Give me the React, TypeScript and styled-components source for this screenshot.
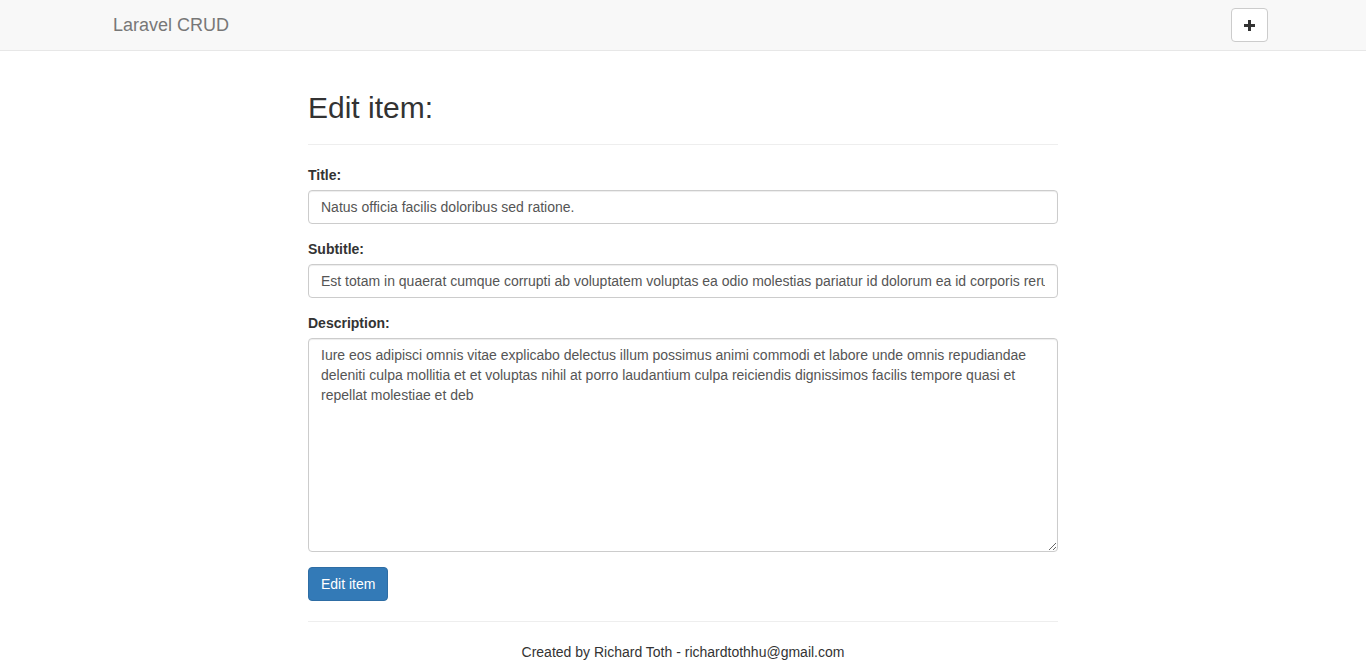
import React from "react"
import styled, { createGlobalStyle } from "styled-components"

const GlobalStyle = createGlobalStyle`
  * {
    box-sizing: border-box;
  }
  body {
    margin: 0;
    background: #fff;
    font-family: "Liberation Sans", Arial, sans-serif;
    font-size: 14px;
    line-height: 1.42857143;
    color: #333;
  }
`

const App: React.FC = () => {
  return (
    <>
      <GlobalStyle />
      <Navbar />
      <Content>
        <PageTitle>Edit item:</PageTitle>
        <Rule />
        <form onSubmit={e => e.preventDefault()}>
          <FormGroup>
            <Label htmlFor="title">Title:</Label>
            <Input id="title" defaultValue="Natus officia facilis doloribus sed ratione." />
          </FormGroup>
          <FormGroup>
            <Label htmlFor="subtitle">Subtitle:</Label>
            <Input
              id="subtitle"
              defaultValue="Est totam in quaerat cumque corrupti ab voluptatem voluptas ea odio molestias pariatur id dolorum ea id corporis rerum."
            />
          </FormGroup>
          <FormGroup>
            <Label htmlFor="description">Description:</Label>
            <TextArea
              id="description"
              rows={10}
              defaultValue="Iure eos adipisci omnis vitae explicabo delectus illum possimus animi commodi et labore unde omnis repudiandae deleniti culpa mollitia et et voluptas nihil at porro laudantium culpa reiciendis dignissimos facilis tempore quasi et repellat molestiae et deb"
            />
          </FormGroup>
          <PrimaryButton type="submit">Edit item</PrimaryButton>
        </form>
        <Rule />
        <Footer>Created by Richard Toth - richardtothhu@gmail.com</Footer>
      </Content>
    </>
  )
}

const Navbar: React.FC = () => {
  return (
    <StyledNavbar>
      <div className="nav-inner">
        <Brand href="#">Laravel CRUD</Brand>
        <IconButton type="button" aria-label="Add item">
          <svg width="11" height="11" viewBox="0 0 11 11">
            <path d="M4 0h3v4h4v3H7v4H4V7H0V4h4z" fill="#333" />
          </svg>
        </IconButton>
      </div>
    </StyledNavbar>
  )
}

const StyledNavbar = styled.nav`
  min-height: 50px;
  background-color: #f8f8f8;
  border-bottom: 1px solid #e7e7e7;
  margin-bottom: 20px;
  & .nav-inner {
    width: 1170px;
    margin: 0 auto;
    padding: 0 0 0 15px;
    height: 50px;
    display: flex;
    align-items: center;
    justify-content: space-between;
  }
`

const Brand = styled.a`
  font-size: 18px;
  line-height: 20px;
  color: #777;
  text-decoration: none;
`

const IconButton = styled.button`
  width: 37px;
  height: 34px;
  display: flex;
  align-items: center;
  justify-content: center;
  padding: 0;
  background: #fff;
  border: 1px solid #ccc;
  border-radius: 4px;
  cursor: pointer;
`

const Content = styled.main`
  display: flow-root;
  width: 750px;
  margin: 0 auto;
`

const PageTitle = styled.h2`
  margin: 20px 0 10px;
  font-size: 30px;
  font-weight: 500;
  line-height: 1.1;
  color: #333;
`

const Rule = styled.hr`
  margin: 20px 0;
  border: 0;
  border-top: 1px solid #eee;
`

const FormGroup = styled.div`
  margin-bottom: 15px;
`

const Label = styled.label`
  display: inline-block;
  margin-bottom: 5px;
  font-weight: bold;
`

const fieldStyle = `
  display: block;
  width: 100%;
  padding: 6px 12px;
  font-family: "Liberation Sans", Arial, sans-serif;
  font-size: 14px;
  line-height: 1.42857143;
  color: #555;
  background-color: #fff;
  border: 1px solid #ccc;
  border-radius: 4px;
  box-shadow: inset 0 1px 1px rgba(0, 0, 0, 0.075);
  outline: none;
`

const Input = styled.input`
  ${fieldStyle}
  height: 34px;
`

const TextArea = styled.textarea`
  ${fieldStyle}
  height: 214px;
  resize: vertical;
`

const PrimaryButton = styled.button`
  display: inline-block;
  padding: 6px 12px;
  font-family: "Liberation Sans", Arial, sans-serif;
  font-size: 14px;
  line-height: 1.42857143;
  color: #fff;
  background-color: #337ab7;
  border: 1px solid #2e6da4;
  border-radius: 4px;
  cursor: pointer;
`

const Footer = styled.footer`
  text-align: center;
  margin-bottom: 20px;
`

export default App
